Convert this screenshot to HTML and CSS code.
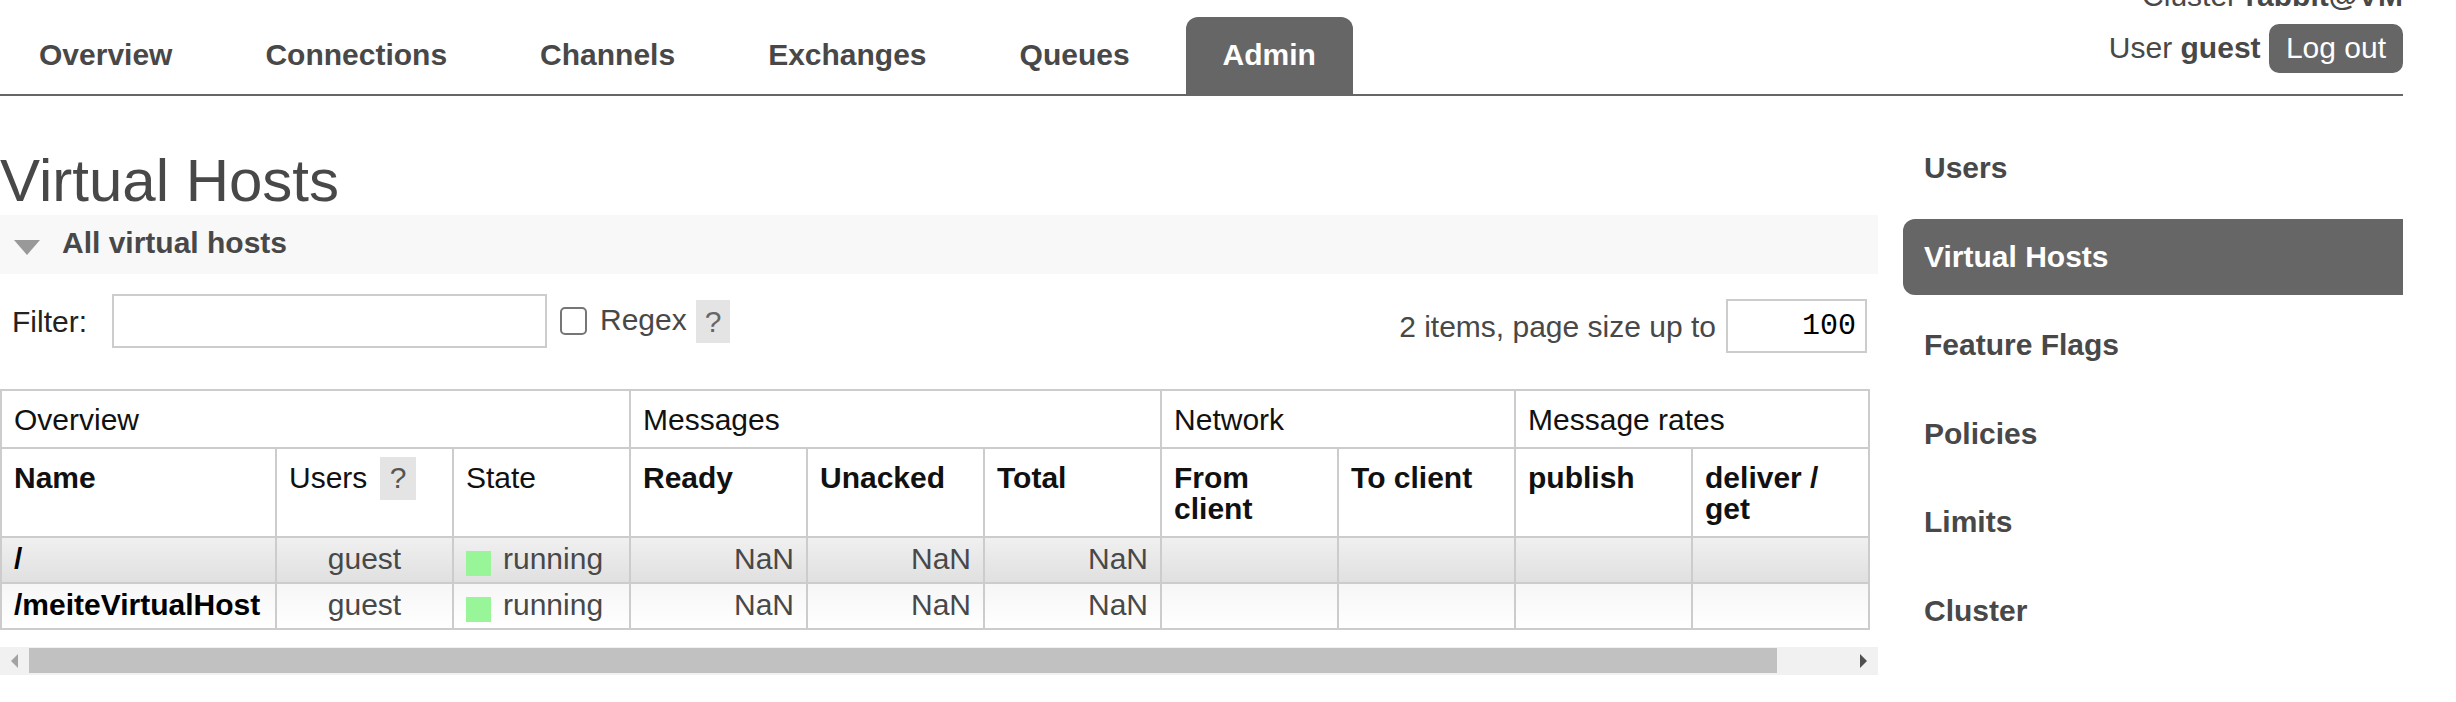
FILE: index.html
```html
<!DOCTYPE html>
<html lang="en">
<head>
<meta charset="utf-8">
<title>RabbitMQ Management - Virtual Hosts</title>
<link rel="stylesheet" href="styles.css">
</head>
<body>
<div class="page">
  <header class="top">
    <ul class="tabs">
      <li><a class="tab">Overview</a></li>
      <li><a class="tab">Connections</a></li>
      <li><a class="tab">Channels</a></li>
      <li><a class="tab">Exchanges</a></li>
      <li><a class="tab">Queues</a></li>
      <li><a class="tab tab-sel">Admin</a></li>
    </ul>
    <div class="login">
      <div class="cluster">Cluster <b>rabbit@VM</b></div>
      <div class="user">User <b>guest</b> <button class="logout">Log out</button></div>
    </div>
  </header>

  <div class="main">
    <div class="content">
      <h1 class="title">Virtual Hosts</h1>
      <div class="section-bar"><span class="tri"></span>All virtual hosts</div>

      <div class="filter-row">
        <div class="filter-left">
          <span class="filter-label">Filter:</span>
          <input class="filter-input" type="text">
          <span class="chk"></span>
          <span class="regex">Regex</span>
          <span class="help-box">?</span>
        </div>
        <div class="filter-right">
          <span class="items">2 items, page size up to</span>
          <input class="pagesize" type="text" value="100">
        </div>
      </div>

      <table class="list">
        <colgroup>
          <col class="col-name">
          <col class="col"><col class="col"><col class="col"><col class="col">
          <col class="col"><col class="col"><col class="col"><col class="col"><col class="col">
        </colgroup>
        <thead>
          <tr class="group">
            <th colspan="3">Overview</th>
            <th colspan="3">Messages</th>
            <th colspan="2">Network</th>
            <th colspan="2">Message rates</th>
          </tr>
          <tr class="heads">
            <th class="b">Name</th>
            <th>Users <span class="help">?</span></th>
            <th>State</th>
            <th class="b">Ready</th>
            <th class="b">Unacked</th>
            <th class="b">Total</th>
            <th class="b">From<br>client</th>
            <th class="b">To client</th>
            <th class="b">publish</th>
            <th class="b">deliver /<br>get</th>
          </tr>
        </thead>
        <tbody>
          <tr class="alt1">
            <td class="name">/</td>
            <td class="c">guest</td>
            <td><span class="status"></span>running</td>
            <td class="r">NaN</td>
            <td class="r">NaN</td>
            <td class="r">NaN</td>
            <td></td><td></td><td></td><td></td>
          </tr>
          <tr class="alt2">
            <td class="name">/meiteVirtualHost</td>
            <td class="c">guest</td>
            <td><span class="status"></span>running</td>
            <td class="r">NaN</td>
            <td class="r">NaN</td>
            <td class="r">NaN</td>
            <td></td><td></td><td></td><td></td>
          </tr>
        </tbody>
      </table>

      <div class="hscroll">
        <div class="sb-btn"><span class="arr-left"></span></div>
        <div class="sb-track"><div class="sb-thumb"></div></div>
        <div class="sb-btn"><span class="arr-right"></span></div>
      </div>
    </div>

    <nav class="side">
      <ul class="side-list">
        <li><a class="side-link">Users</a></li>
        <li><a class="side-link side-sel">Virtual Hosts</a></li>
        <li><a class="side-link">Feature Flags</a></li>
        <li><a class="side-link">Policies</a></li>
        <li><a class="side-link">Limits</a></li>
        <li><a class="side-link">Cluster</a></li>
      </ul>
    </nav>
  </div>
</div>
</body>
</html>
```

FILE: styles.css
```css
html, body {
  margin: 0;
  padding: 0;
  background: #fff;
}
body {
  font-family: "Liberation Sans", Arial, sans-serif;
  font-size: 30px;
  line-height: 31px;
  color: #484848;
  overflow: hidden;
}
.page {
  width: 2403px;
}

/* ---------- header ---------- */
.top {
  display: flex;
  justify-content: space-between;
  align-items: flex-start;
  border-bottom: 2px solid #666;
  height: 94px;
}
.tabs {
  list-style: none;
  margin: 0;
  padding: 17px 0 0 2px;
  display: flex;
  gap: 19px;
}
.tab {
  display: block;
  padding: 22px 37px 24px;
  font-weight: bold;
  color: #484848;
  border-radius: 12px 12px 0 0;
}
.tab-sel {
  background: #666;
  color: #fff;
}
.login {
  margin-top: -20px;
  text-align: right;
}
.cluster b, .user b {
  color: #484848;
}
.user {
  margin-top: 13px;
}
.logout {
  display: inline-block;
  font-family: "Liberation Sans", Arial, sans-serif;
  font-size: 30px;
  line-height: 31px;
  padding: 8px 17px 10px;
  margin: 0;
  border: none;
  border-radius: 10px;
  background: #666;
  color: #fff;
}

/* ---------- main ---------- */
.main {
  display: flex;
  gap: 25px;
}
.content {
  width: 1878px;
}
.title {
  margin: 50px 0 0;
  font-size: 60px;
  line-height: 69px;
  font-weight: normal;
  color: #484848;
}
.section-bar {
  background: #f8f8f8;
  padding: 12px 0 16px 14px;
  font-weight: bold;
  color: #484848;
}
.tri {
  display: inline-block;
  width: 0;
  height: 0;
  border-left: 13px solid transparent;
  border-right: 13px solid transparent;
  border-top: 15px solid #999;
  margin-right: 22px;
  vertical-align: -2px;
}

.filter-row {
  display: flex;
  justify-content: space-between;
  align-items: flex-start;
  padding-right: 11px;
}
.filter-left {
  display: flex;
  align-items: center;
  margin-top: 20px;
  padding-left: 12px;
}
.filter-label {
  color: #222;
  margin-right: 25px;
}
.filter-input {
  box-sizing: border-box;
  width: 435px;
  height: 54px;
  border: 2px solid #ccc;
  margin: 0 13px 0 0;
  padding: 0 8px;
  font-family: "Liberation Sans", Arial, sans-serif;
  font-size: 30px;
  background: #fff;
}
.chk {
  box-sizing: border-box;
  width: 27px;
  height: 28px;
  border: 2px solid #767676;
  border-radius: 5px;
  background: #fff;
  margin-right: 13px;
}
.regex {
  margin-right: 9px;
  margin-top: -3px;
}
.help-box {
  background: #e4e4e4;
  color: #666;
  padding: 6px 9px;
}
.filter-right {
  display: flex;
  align-items: center;
  margin-top: 25px;
}
.items {
  margin-right: 10px;
}
.pagesize {
  box-sizing: border-box;
  width: 141px;
  height: 54px;
  border: 2px solid #ccc;
  margin: 0;
  padding: 0 9px 0 0;
  text-align: right;
  font-family: "Liberation Mono", "Courier New", monospace;
  font-size: 30px;
  color: #000;
  background: #fff;
}

/* ---------- table ---------- */
.list {
  margin-top: 36px;
  border-collapse: collapse;
  table-layout: fixed;
  width: 1868px;
}
.col-name { width: 275px; }
.col { width: 177px; }
.list th,
.list td {
  border: 2px solid #ccc;
}
.list th {
  padding: 13px 12px 12px;
  text-align: left;
  vertical-align: top;
  font-weight: normal;
  color: #111;
  background: #fff;
}
.list th.b {
  font-weight: bold;
}
.help {
  background: #e4e4e4;
  color: #555;
  padding: 4px 10px 6px;
  margin-left: 4px;
}
.list td {
  padding: 5px 12px 6px;
  vertical-align: baseline;
  color: #484848;
}
.list td.name {
  font-weight: bold;
  color: #000;
}
.list td.c { text-align: center; }
.list td.r { text-align: right; }
.alt1 td {
  background: linear-gradient(#f0f0f0, #e0e0e0);
}
.alt2 td {
  background: linear-gradient(#f6f6f6, #ffffff);
}
.status {
  display: inline-block;
  width: 25px;
  height: 25px;
  background: #98f598;
  margin-right: 12px;
  vertical-align: -7px;
}

/* ---------- fake horizontal scrollbar ---------- */
.hscroll {
  margin-top: 17px;
  height: 28px;
  background: #f1f1f1;
  display: flex;
}
.sb-btn {
  width: 29px;
  display: flex;
  align-items: center;
  justify-content: center;
}
.arr-left {
  width: 0;
  height: 0;
  border-top: 7px solid transparent;
  border-bottom: 7px solid transparent;
  border-right: 7px solid #a3a3a3;
}
.arr-right {
  width: 0;
  height: 0;
  border-top: 7px solid transparent;
  border-bottom: 7px solid transparent;
  border-left: 7px solid #505050;
}
.sb-track {
  flex: 1;
  padding: 1px 0 2px;
  display: flex;
}
.sb-thumb {
  width: 1748px;
  background: #c1c1c1;
}

/* ---------- sidebar ---------- */
.side {
  width: 500px;
}
.side-list {
  list-style: none;
  margin: 34px 0 0;
  padding: 0;
}
.side-link {
  display: block;
  line-height: 76px;
  padding-left: 21px;
  margin-bottom: 12.5px;
  font-weight: bold;
  color: #484848;
  border-radius: 12px 0 0 12px;
}
.side-sel {
  background: #666;
  color: #fff;
}
```
